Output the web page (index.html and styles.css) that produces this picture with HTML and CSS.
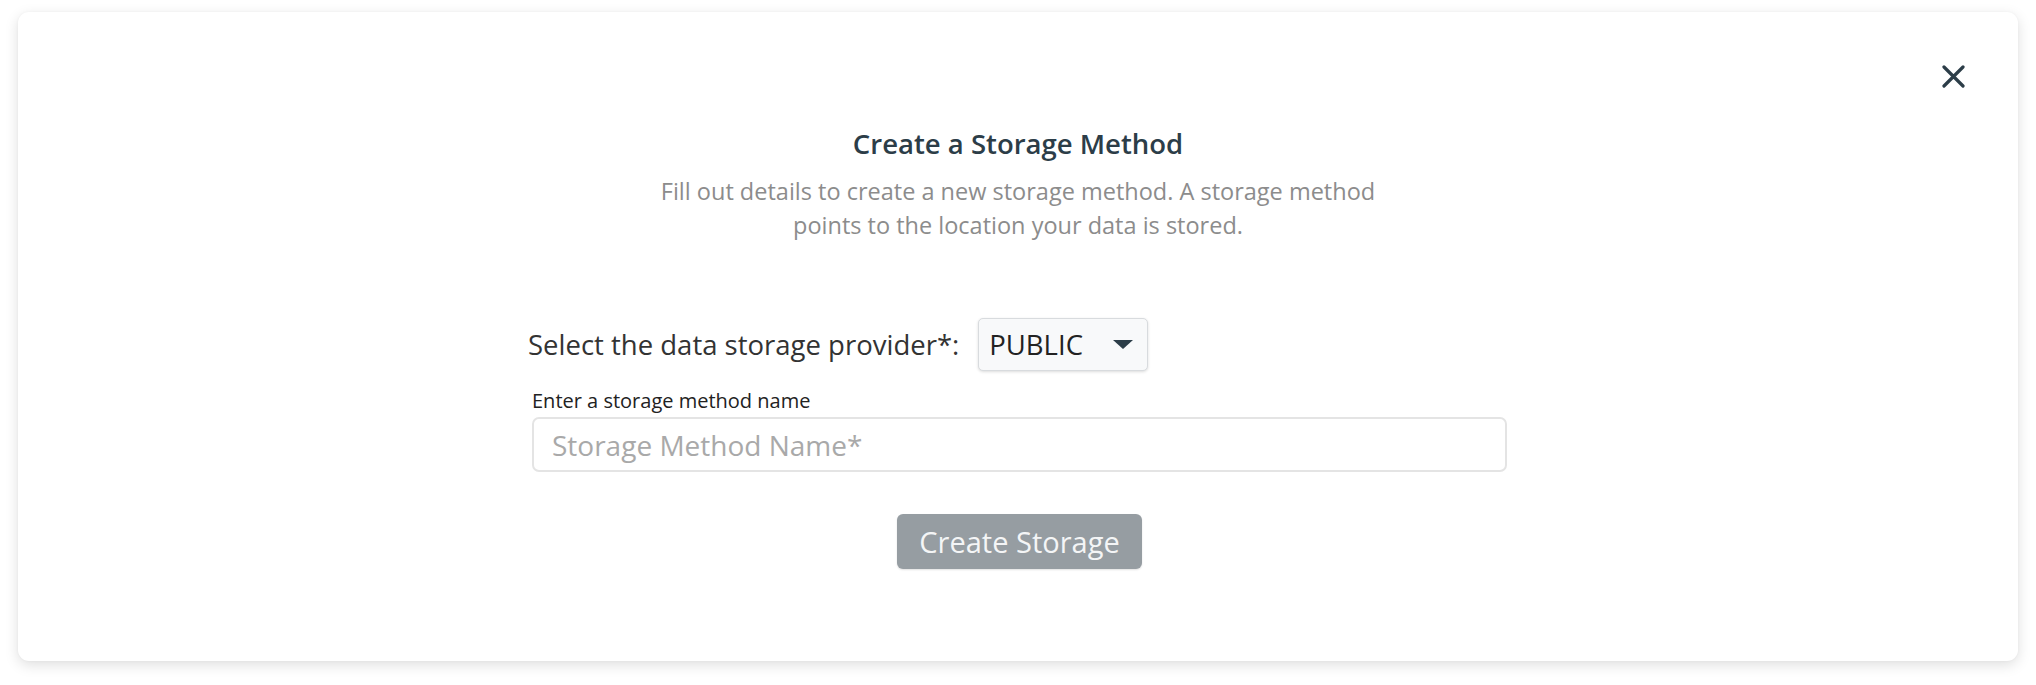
FILE: index.html
```html
<!DOCTYPE html>
<html lang="en">
<head>
<meta charset="utf-8">
<title>Create a Storage Method</title>
<link rel="stylesheet" href="styles.css">
</head>
<body>
  <div class="modal">
    <button class="close" type="button" aria-label="Close">
      <svg width="23" height="23" viewBox="0 0 23 23" aria-hidden="true">
        <path d="M2 2 L21 21 M21 2 L2 21" stroke="#2c3d48" stroke-width="3.2" stroke-linecap="round" fill="none"/>
      </svg>
    </button>
    <div class="content">
      <h1 class="title">Create a Storage Method</h1>
      <p class="subtitle">Fill out details to create a new storage method. A storage method points to the location your data is stored.</p>
      <form class="form">
        <div class="provider-row">
          <span class="provider-label">Select the data storage provider*:</span>
          <div class="select">
            <span class="select-value">PUBLIC</span>
            <span class="caret"></span>
          </div>
        </div>
        <label class="name-label" for="name">Enter a storage method name</label>
        <input class="name-input" id="name" type="text" placeholder="Storage Method Name*">
        <div class="actions">
          <button class="create" type="button">Create Storage</button>
        </div>
      </form>
    </div>
  </div>
</body>
</html>
```

FILE: styles.css
```css
* { box-sizing: border-box; }

html, body {
  margin: 0;
  background: #ffffff;
}

body {
  padding: 12px 18px 24px 18px;
  font-family: "Open Sans", "Noto Sans", sans-serif;
}

.modal {
  position: relative;
  width: 2000px;
  height: 649px;
  background: #ffffff;
  border-radius: 11px;
  box-shadow: 0 4px 14px rgba(0, 0, 0, 0.13), 0 0 3px rgba(0, 0, 0, 0.04);
  padding-top: 114px;
}

.close {
  position: absolute;
  top: 53px;
  right: 53px;
  width: 23px;
  height: 23px;
  padding: 0;
  border: 0;
  background: transparent;
  display: flex;
}

.content {
  display: flex;
  flex-direction: column;
  align-items: center;
}

.title {
  margin: 0;
  font-size: 27.5px;
  line-height: 36px;
  font-weight: 600;
  color: #2c3d48;
}

.subtitle {
  margin: 12px 0 0 0;
  width: 760px;
  text-align: center;
  font-size: 23.5px;
  line-height: 34px;
  color: #8c8c8c;
}

.form {
  margin-top: 76px;
  width: 975px;
  margin-left: 3px;
  display: flex;
  flex-direction: column;
}

.provider-row {
  display: flex;
  align-items: center;
  gap: 19px;
  margin-left: -4px;
}

.provider-label {
  font-size: 27.5px;
  line-height: 38px;
  color: #333333;
}

.select {
  width: 170px;
  height: 53px;
  display: flex;
  align-items: center;
  justify-content: space-between;
  padding: 0 14px 0 10px;
  background: #f8f9fa;
  border: 1px solid #d8dbde;
  border-radius: 5px;
  box-shadow: 0 1px 3px rgba(0, 0, 0, 0.14);
}

.select-value {
  font-size: 27.5px;
  line-height: 36px;
  color: #222222;
}

.caret {
  width: 0;
  height: 0;
  border-left: 10px solid transparent;
  border-right: 10px solid transparent;
  border-top: 9px solid #2c3d48;
}

.name-label {
  margin-top: 17px;
  font-size: 20px;
  line-height: 26px;
  color: #222222;
}

.name-input {
  margin-top: 3px;
  width: 975px;
  height: 55px;
  padding: 0 18px;
  border: 2px solid #e4e4e4;
  border-radius: 7px;
  background: #ffffff;
  font-family: "Open Sans", "Noto Sans", sans-serif;
  font-size: 28px;
  color: #333333;
  outline: none;
}

.name-input::placeholder {
  color: #a9a9a9;
}

.actions {
  margin-top: 42px;
  display: flex;
  justify-content: center;
}

.create {
  height: 55px;
  padding: 0 22px;
  border: 0;
  border-radius: 6px;
  background: #969da2;
  color: #f4f5f6;
  font-family: "Open Sans", "Noto Sans", sans-serif;
  font-size: 29px;
  line-height: 36px;
  box-shadow: 0 1px 2px rgba(0, 0, 0, 0.12);
}
```
